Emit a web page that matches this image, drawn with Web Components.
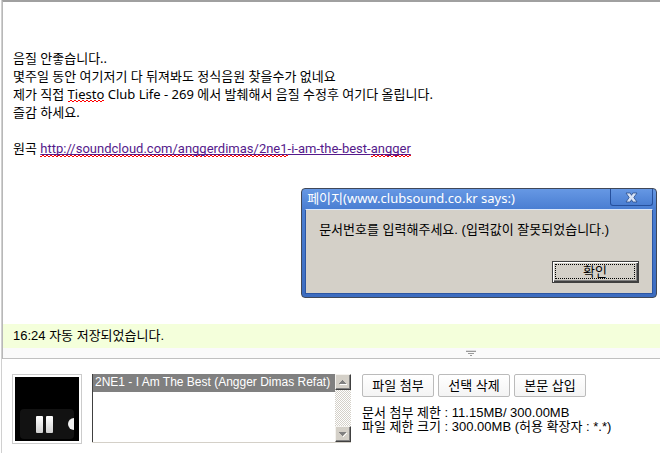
<!DOCTYPE html>
<html lang="ko">
<head>
<meta charset="utf-8">
<title>글쓰기</title>
<style>
    body {
        margin: 0;
        background: #ffffff;
        color: #000000;
        font: 13px/18px "Liberation Sans", "Noto Sans CJK KR", sans-serif;
    }
</style>
</head>
<body>
<write-page>
    <post-editor>
        <p>음질 안좋습니다..</p>
        <p>몇주일 동안 여기저기 다 뒤져봐도 정식음원 찾을수가 없네요</p>
        <p>제가 직접 <spell-mark>Tiesto</spell-mark> Club Life - 269 에서 발췌해서 음질 수정후 여기다 올립니다.</p>
        <p>즐감 하세요.</p>
        <p>&nbsp;</p>
        <p>원곡 <post-link><a href="http://soundcloud.com/anggerdimas/2ne1-i-am-the-best-angger"><spell-mark>http://soundcloud.com/anggerdimas/2ne1</spell-mark>-i-am-the-best-<spell-mark>angger</spell-mark></a></post-link></p>
        <span slot="status">16:24 자동 저장되었습니다.</span>
    </post-editor>
    <file-uploader></file-uploader>
    <alert-dialog slot="dialog" heading="페이지(www.clubsound.co.kr says:)">문서번호를 입력해주세요. (입력값이 잘못되었습니다.)</alert-dialog>
</write-page>

<script>
const define = (name, html) => {
    const template = document.createElement('template');
    template.innerHTML = html.trim();

    window.customElements.define(name, class extends HTMLElement {
        constructor() {
            super();
            this.attachShadow({ mode: 'open' })
            .appendChild(template.content.cloneNode(true));
        }

        connectedCallback() {
            const heading = this.shadowRoot.querySelector('.heading');
            if (heading) {
                heading.textContent = this.getAttribute('heading');
            }
        }
    });
};

define('write-page', `
    <style>
        :host {
            display: block;
            position: relative;
            min-height: 100vh;
            box-sizing: border-box;
            margin-left: 1px;
            border-left: 1px solid #d0d0d0;
        }
    </style>
    <slot></slot>
    <slot name="dialog"></slot>
`);

// two 1px rows of dashes make the small zigzag of the spell checker
define('spell-mark', `
    <style>
        :host {
            display: inline;
            padding-bottom: var(--mark-space, 0);
            background:
                linear-gradient(90deg, #ff0000 50%, transparent 0) 0 calc(100% - 1px) / 4px 1px repeat-x,
                linear-gradient(90deg, transparent 50%, #ff0000 0) 0 calc(100% - 2px) / 4px 1px repeat-x;
        }
    </style><slot></slot>
`);

define('post-link', `
    <style>
        :host {
            --mark-space: 2px;
            display: inline;
            font-family: Roboto, sans-serif;
        }

        ::slotted(a) {
            color: #551a8b;
            text-decoration-skip-ink: none;
        }
    </style><slot></slot>
`);

define('post-editor', `
    <style>
        :host {
            display: block;
            border-left: 1px solid #b8b8b8;
            border-top: 2px solid #a0a0a0;
        }

        .body {
            padding: 47px 10px;
            min-height: 322px;
            box-sizing: border-box;
            font-family: "Noto Sans", "Noto Sans CJK KR", sans-serif;
        }

        ::slotted(p) {
            margin: 0;
        }

        .status {
            background: #f4ffdb;
            padding: 3px 10px;
        }

        .resize {
            display: flex;
            box-sizing: border-box;
            width: 100%;
            height: 11px;
            padding: 2px 0 0 70.5%;
            border: 0;
            border-bottom: 1px solid #c0c0c0;
            background: #fafafa;
            cursor: n-resize;
        }
    </style>
    <div class="body"><slot></slot></div>
    <div class="status"><slot name="status"></slot></div>
    <button class="resize" type="button" aria-label="입력창 크기 조절">
        <svg width="10" height="6" viewBox="0 0 10 6" shape-rendering="crispEdges" fill="#999999">
            <path d="M0 0h10v1H0z" fill="#dddddd"/>
            <path d="M0 1h10v1H0zM2 3h6v1H2zM4 5h2v1H4z"/>
        </svg>
    </button>
`);

define('file-uploader', `
    <style>
        :host {
            display: flex;
            align-items: flex-start;
            gap: 10px;
            padding: 15px 10px 9px;
        }

        .info {
            display: grid;
            gap: 9px;
            margin-left: 1px;
        }

        .buttons {
            display: flex;
            gap: 4px;
        }

        .limits {
            line-height: 14px;
        }
    </style>
    <file-preview></file-preview>
    <file-list></file-list>
    <div class="info">
        <div class="buttons">
            <tool-button>파일 첨부</tool-button>
            <tool-button>선택 삭제</tool-button>
            <tool-button>본문 삽입</tool-button>
        </div>
        <div class="limits">
            <div>문서 첨부 제한 : 11.15MB/ 300.00MB</div>
            <div>파일 제한 크기 : 300.00MB (허용 확장자 : *.*)</div>
        </div>
    </div>
`);

define('file-preview', `
    <style>
        :host {
            display: block;
            border: 1px solid #cccccc;
            padding: 2px;
        }

        svg {
            display: block;
        }
    </style>
    <svg width="64" height="64" viewBox="0 0 64 64">
        <defs>
            <linearGradient id="bar" x2="0" y2="1">
                <stop offset="0" stop-color="#ffffff"/>
                <stop offset="1" stop-color="#d0d0d0"/>
            </linearGradient>
            <clipPath id="panel"><rect x="5" y="32" width="54" height="30" rx="4"/></clipPath>
        </defs>
        <rect width="64" height="64" fill="#000000"/>
        <rect x="5" y="32" width="54" height="30" rx="4" fill="#121212"/>
        <rect x="21" y="39" width="7" height="17" rx="1" fill="url(#bar)"/>
        <rect x="31" y="39" width="7" height="17" rx="1" fill="url(#bar)"/>
        <circle cx="59" cy="47" r="6" fill="#f2f2f2" clip-path="url(#panel)"/>
    </svg>
`);

define('file-list', `
    <style>
        :host {
            display: flex;
            width: 259px;
            height: 69px;
            box-sizing: border-box;
            border-bottom: 1px solid #d4d0c8;
        }

        select {
            flex: 1;
            min-width: 0;
            margin: 0;
            padding: 0;
            border: 0;
            border-left: 1px solid #404040;
            border-radius: 0;
            outline: 0;
            overflow: hidden;
            background: #ffffff;
            font: 12px/17px "Liberation Sans", "Noto Sans CJK KR", sans-serif;
        }

        option {
            min-height: 17px;
            padding: 1px 2px 0;
        }

        option:checked {
            background: #808080 linear-gradient(#808080, #808080);
            color: #ffffff;
            -webkit-text-fill-color: #ffffff;
        }

        .scroll {
            display: flex;
            flex-direction: column;
            justify-content: space-between;
            width: 16px;
            background: repeating-conic-gradient(#d4d0c8 0 25%, #ffffff 0 50%) 0 0 / 2px 2px;
        }

        button {
            display: grid;
            place-items: center;
            width: 16px;
            height: 16px;
            padding: 0;
            border: 1px solid;
            border-color: #f4f2ee #404040 #404040 #f4f2ee;
            box-shadow: inset -1px -1px #808080;
            background: #d4d0c8;
        }
    </style>
    <select size="4" aria-label="첨부 파일">
        <option selected>2NE1 - I Am The Best (Angger Dimas Refat)</option>
    </select>
    <div class="scroll">
        <button type="button" aria-label="위로">
            <svg width="8" height="5" viewBox="0 0 8 5" shape-rendering="crispEdges"><path d="M1 5h7v-1H1z" fill="#ffffff"/><path d="M3 0h1v1h1v1h1v1h1v1H0V3h1V2h1V1h1z" fill="#808080"/></svg>
        </button>
        <button type="button" aria-label="아래로">
            <svg width="8" height="5" viewBox="0 0 8 5" shape-rendering="crispEdges"><path d="M8 1h-1v1h-1v1h-1v1h-1v1h1V4h1V3h1V2h1z" fill="#ffffff"/><path d="M0 0h7v1H6v1H5v1H4v1H3V3H2V2H1V1H0z" fill="#808080"/></svg>
        </button>
    </div>
`);

define('tool-button', `
    <style>
        :host {
            display: block;
        }

        button {
            display: block;
            min-width: 72px;
            height: 23px;
            padding: 0 9px;
            border: 1px solid #bbbbbb;
            border-radius: 2px;
            background: linear-gradient(#ffffff, #f4f4f4);
            color: inherit;
            font: inherit;
            white-space: nowrap;
        }
    </style>
    <button type="button"><slot></slot></button>
`);

define('alert-dialog', `
    <style>
        :host {
            position: absolute;
            top: 188px;
            right: 3px;
        }

        section {
            border: 1px solid #404858;
            border-radius: 4px;
            background: linear-gradient(#6698e4, #4a7ed2 20px, #3c6cc0);
            padding: 0 3px 3px;
        }

        header {
            display: flex;
            justify-content: space-between;
            height: 20px;
            padding-left: 2px;
            color: #ffffff;
            line-height: 18px;
        }

        h1 {
            margin: 0;
            font: inherit;
            font-family: "Noto Sans", "Noto Sans CJK KR", sans-serif;
        }

        .close {
            display: grid;
            place-items: center;
            width: 43px;
            height: 17px;
            padding: 0;
            border: 1px solid #26509c;
            border-top: 0;
            border-radius: 0 0 3px 3px;
            background: linear-gradient(#6698e4, #4a7ed2);
        }

        .content {
            display: grid;
            background: #d4d0c8;
            border: 1px solid #2c56a4;
            border-top-color: #dce8fa;
            padding: 11px 13px 10px;
        }

        p {
            margin: 0 30px 22px 0;
        }

        .ok {
            justify-self: end;
            width: 87px;
            height: 22px;
            padding: 1px;
            border: 1px solid #404040;
            box-shadow: inset 1px 1px #ffffff, inset -1px -1px #404040, inset -2px -2px #808080;
            background: #d4d0c8;
            color: #000000;
            font: inherit;
        }

        .ok span {
            display: block;
            margin: 1px 2px 2px 1px;
            border: 1px dotted #000000;
            line-height: 13px;
        }
    </style>
    <section role="alertdialog">
        <header>
            <h1 class="heading"></h1>
            <button class="close" type="button" aria-label="닫기">
                <svg width="13" height="11" viewBox="0 0 13 11">
                    <path d="M1 1h4.200L6.500 3.300 7.800 1H12L8.800 5.500 12 10H7.800L6.500 7.700 5.200 10H1l3.200-4.500z" fill="#d8e4f8" stroke="#2c4c88" stroke-width=".8"/>
                </svg>
            </button>
        </header>
        <div class="content">
            <p><slot></slot></p>
            <button class="ok" type="button"><span>확인</span></button>
        </div>
    </section>
`);
</script>
</body>
</html>
